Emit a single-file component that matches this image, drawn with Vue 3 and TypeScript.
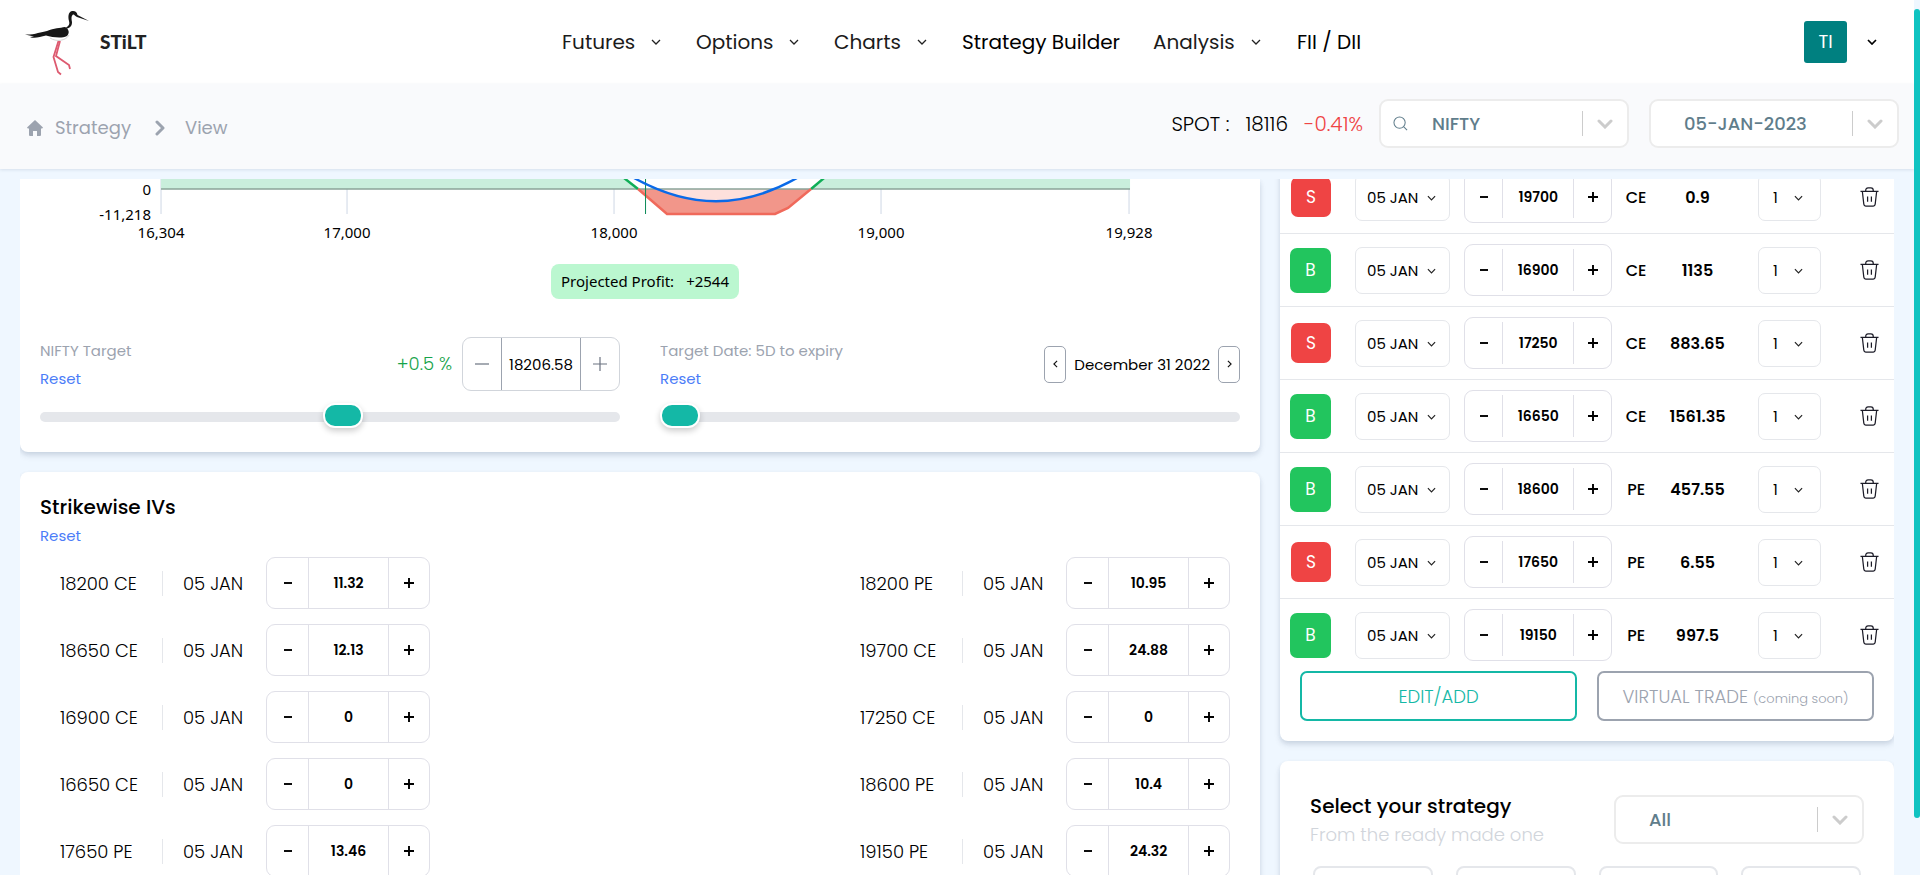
<script setup lang="ts">
import { ref } from 'vue'

interface NavItem {
  label: string
  menu: boolean
}
interface Leg {
  side: 'B' | 'S'
  strike: string
  type: 'CE' | 'PE'
  price: string
}
interface StrikeIv {
  name: string
  iv: string
}

const navItems: NavItem[] = [
  { label: 'Futures', menu: true },
  { label: 'Options', menu: true },
  { label: 'Charts', menu: true },
  { label: 'Strategy Builder', menu: false },
  { label: 'Analysis', menu: true },
  { label: 'FII / DII', menu: false },
]

const legs = ref<Leg[]>([
  { side: 'S', strike: '19700', type: 'CE', price: '0.9' },
  { side: 'B', strike: '16900', type: 'CE', price: '1135' },
  { side: 'S', strike: '17250', type: 'CE', price: '883.65' },
  { side: 'B', strike: '16650', type: 'CE', price: '1561.35' },
  { side: 'B', strike: '18600', type: 'PE', price: '457.55' },
  { side: 'S', strike: '17650', type: 'PE', price: '6.55' },
  { side: 'B', strike: '19150', type: 'PE', price: '997.5' },
])

const ivs = ref<StrikeIv[]>([
  { name: '18200 CE', iv: '11.32' },
  { name: '18200 PE', iv: '10.95' },
  { name: '18650 CE', iv: '12.13' },
  { name: '19700 CE', iv: '24.88' },
  { name: '16900 CE', iv: '0' },
  { name: '17250 CE', iv: '0' },
  { name: '16650 CE', iv: '0' },
  { name: '18600 PE', iv: '10.4' },
  { name: '17650 PE', iv: '13.46' },
  { name: '19150 PE', iv: '24.32' },
])

const ticks = [
  { x: 161, label: '16,304' },
  { x: 347, label: '17,000' },
  { x: 614, label: '18,000' },
  { x: 881, label: '19,000' },
  { x: 1129, label: '19,928' },
]

const target = ref('18206.58')
const targetPosition = ref(524)
const datePosition = ref(0)
</script>

<template>
  <div class="app">
    <header class="topbar">
      <a class="brand" href="#">
        <svg class="bird" viewBox="24 8 66 67" aria-hidden="true">
          <path d="M58.500 40 L53.500 56 L58 71 L61 73.500" fill="none" stroke="#dd5a70" stroke-width="1.800" />
          <path d="M60 40 L56 55 L69 64 L70 68" fill="none" stroke="#dd5a70" stroke-width="1.800" />
          <path d="M50 37 C56 41 66 40 69 34" fill="#fff" stroke="#d4d4d4" stroke-width="1" />
          <path
            d="M25 33.500 C34 34 41 31 47 30 C54 27 60 27 65 26 C69 28 70 32 67 35 C61 38 52 36 46 34.500 C40 36 34 38 30 36 L34 35.500 Z"
            fill="#161616"
          />
          <path
            d="M66 26.500 C69 25 70 23 69 20 C68 16 68 11 72 10 C75 9.500 77 11 77.500 14 L89 20 L77 16 C75 15 74 13 73 13.500 C71 15 71.500 18 72 21 C72 25 70 27 67 27.500 Z"
            fill="#161616"
          />
        </svg>
        <span class="brand-name">STiLT</span>
      </a>
      <nav class="nav" aria-label="Main">
        <a v-for="item in navItems" :key="item.label" href="#" class="nav-link" :class="{ plain: !item.menu }">
          {{ item.label }}
          <svg v-if="item.menu" class="chev" viewBox="0 0 10 6" aria-hidden="true"><path d="M1 1l4 4 4-4" /></svg>
        </a>
      </nav>
      <button class="account" type="button" aria-label="Account menu">
        <span class="avatar">TI</span>
        <svg class="chev bold" viewBox="0 0 10 6" aria-hidden="true"><path d="M1 1l4 4 4-4" /></svg>
      </button>
    </header>

    <div class="subbar">
      <nav class="crumbs" aria-label="Breadcrumb">
        <svg class="home" viewBox="0 0 16 16" aria-hidden="true">
          <path d="M8 0l8 7.500-.8 1H14V15q0 1-1 1H10V11H6v5H3q-1 0-1-1V8.500H.8L0 7.500Z" />
        </svg>
        <a href="#">Strategy</a>
        <svg class="crumb-sep" viewBox="0 0 10 16" aria-hidden="true"><path d="M2 2l6 6-6 6" /></svg>
        <a href="#">View</a>
      </nav>
      <div class="spot">
        <span>SPOT :</span>
        <span>18116</span>
        <span class="down">-0.41%</span>
      </div>
      <div class="pick search">
        <svg class="lens" viewBox="0 0 16 16" aria-hidden="true">
          <circle cx="7" cy="7" r="6" /><path d="M11.500 11.500l3.500 3.500" />
        </svg>
        <select aria-label="Symbol"><option>NIFTY</option></select>
        <svg class="pick-arrow" viewBox="0 0 16 10" aria-hidden="true"><path d="M2 2l6 6 6-6" /></svg>
      </div>
      <div class="pick">
        <select aria-label="Expiry"><option>05-JAN-2023</option></select>
        <svg class="pick-arrow" viewBox="0 0 16 10" aria-hidden="true"><path d="M2 2l6 6 6-6" /></svg>
      </div>
    </div>

    <main class="content">
      <div class="column">
        <section class="card first">
          <svg class="chart" viewBox="20 179 1240 66" role="img" aria-label="Payoff chart">
            <g stroke="#dfe5ee" stroke-width="1.500">
              <line v-for="t in ticks" :key="t.x" :x1="t.x" :x2="t.x" y1="179" y2="214" />
            </g>
            <path d="M161 179H624L638 189H161Z" fill="#c9eedc" />
            <path d="M824 179H1130V189H811Z" fill="#c9eedc" />
            <path d="M638 189L667 214H775L788 208L811 189Z" fill="#f2968a" />
            <path d="M658 189Q716 213 773 189Z" fill="#fde0dc" />
            <path d="M161 189H1130" stroke="#8aa398" stroke-width="1.500" />
            <path d="M624 178L638 189" stroke="#0fae57" stroke-width="2.500" />
            <path d="M811 189L824 178" stroke="#0fae57" stroke-width="2.500" />
            <path d="M638 189L667 214H775L788 208L811 189" fill="none" stroke="#f0695b" stroke-width="2.500" />
            <path d="M645.500 179V214" stroke="#0b8a57" stroke-width="1" />
            <path d="M634 178C690 209 742 209 797 178" fill="none" stroke="#0a6ae8" stroke-width="2.500" />
            <g text-anchor="end">
              <text x="151" y="195">0</text>
              <text x="151" y="220">-11,218</text>
            </g>
            <g text-anchor="middle">
              <text v-for="t in ticks" :key="t.label" :x="t.x" y="238">{{ t.label }}</text>
            </g>
          </svg>
          <div class="profit-row">
            <p class="profit"><span>Projected Profit:</span><span>+2544</span></p>
          </div>
          <div class="targets">
            <div class="target">
              <div class="target-head">
                <div class="target-name">
                  <label for="target-range">NIFTY Target</label>
                  <button class="reset" type="button">Reset</button>
                </div>
                <span class="change">+0.5 %</span>
                <div class="stepper light">
                  <button type="button" aria-label="Decrease target">
                    <svg viewBox="0 0 14 14"><path d="M0 7H14" /></svg>
                  </button>
                  <input v-model="target" aria-label="Target price" />
                  <button type="button" aria-label="Increase target">
                    <svg viewBox="0 0 14 14"><path d="M0 7H14M7 0V14" /></svg>
                  </button>
                </div>
              </div>
              <input id="target-range" v-model="targetPosition" class="range" type="range" min="0" max="1000" />
            </div>
            <div class="target">
              <div class="target-head">
                <div class="target-name">
                  <label for="date-range">Target Date: 5D to expiry</label>
                  <button class="reset" type="button">Reset</button>
                </div>
                <div class="day">
                  <button type="button" aria-label="Previous day">
                    <svg viewBox="0 0 6 10"><path d="M5 1L1 5l4 4" /></svg>
                  </button>
                  <span>December 31 2022</span>
                  <button type="button" aria-label="Next day">
                    <svg viewBox="0 0 6 10"><path d="M1 1l4 4-4 4" /></svg>
                  </button>
                </div>
              </div>
              <input id="date-range" v-model="datePosition" class="range" type="range" min="0" max="1000" />
            </div>
          </div>
        </section>

        <section class="card ivs">
          <h2>Strikewise IVs</h2>
          <button class="reset" type="button">Reset</button>
          <ul class="iv-list">
            <li v-for="row in ivs" :key="row.name">
              <span class="iv-name">{{ row.name }}</span>
              <span class="iv-date">05 JAN</span>
              <div class="stepper wide">
                <button type="button" :aria-label="'Decrease IV of ' + row.name">
                  <svg viewBox="0 0 10 10"><path d="M1 5H9" /></svg>
                </button>
                <input v-model="row.iv" :aria-label="'IV of ' + row.name" />
                <button type="button" :aria-label="'Increase IV of ' + row.name">
                  <svg viewBox="0 0 10 10"><path d="M0 5H10M5 0V10" /></svg>
                </button>
              </div>
            </li>
          </ul>
        </section>
      </div>

      <div class="column">
        <section class="card first">
          <table class="legs" aria-label="Strategy legs">
            <colgroup>
              <col class="c-side" /><col class="c-date" /><col class="c-strike" /><col class="c-type" />
              <col class="c-price" /><col class="c-qty" /><col class="c-del" />
            </colgroup>
            <tbody>
              <tr v-for="leg in legs" :key="leg.price">
                <td>
                  <button class="side" :class="leg.side === 'B' ? 'buy' : 'sell'" type="button">{{ leg.side }}</button>
                </td>
                <td>
                  <div class="mini date">
                    <select :aria-label="'Expiry of ' + leg.strike"><option>05 JAN</option></select>
                    <svg class="chev" viewBox="0 0 10 6" aria-hidden="true"><path d="M1 1l4 4 4-4" /></svg>
                  </div>
                </td>
                <td>
                  <div class="stepper inset">
                    <button type="button" :aria-label="'Lower strike ' + leg.strike">
                      <svg viewBox="0 0 10 10"><path d="M1 5H9" /></svg>
                    </button>
                    <input v-model="leg.strike" aria-label="Strike" />
                    <button type="button" :aria-label="'Raise strike ' + leg.strike">
                      <svg viewBox="0 0 10 10"><path d="M0 5H10M5 0V10" /></svg>
                    </button>
                  </div>
                </td>
                <td class="type">{{ leg.type }}</td>
                <td class="price">{{ leg.price }}</td>
                <td class="qty">
                  <div class="mini lots">
                    <select :aria-label="'Lots of ' + leg.strike"><option>1</option></select>
                    <svg class="chev" viewBox="0 0 10 6" aria-hidden="true"><path d="M1 1l4 4 4-4" /></svg>
                  </div>
                </td>
                <td class="del">
                  <button type="button" aria-label="Delete leg">
                    <svg viewBox="0 0 20 21">
                      <path d="M0.500 4.500H19.500M6 4Q6 1 8.500 1H11.500Q14 1 14 4M2.500 5L4 18Q4.200 20 6 20H14Q15.800 20 16 18L17.500 5M8 10V15.500M12 10V15.500" />
                    </svg>
                  </button>
                </td>
              </tr>
            </tbody>
          </table>
          <div class="actions">
            <button class="edit" type="button">EDIT/ADD</button>
            <button class="trade" type="button">VIRTUAL TRADE <small>(coming soon)</small></button>
          </div>
        </section>

        <section class="card strategies">
          <div class="strategies-head">
            <div>
              <h2>Select your strategy</h2>
              <p>From the ready made one</p>
            </div>
            <div class="pick">
              <select aria-label="Strategy filter"><option>All</option></select>
              <svg class="pick-arrow" viewBox="0 0 16 10" aria-hidden="true"><path d="M2 2l6 6 6-6" /></svg>
            </div>
          </div>
          <div class="tiles">
            <div v-for="n in 4" :key="n" class="tile"></div>
          </div>
        </section>
      </div>
    </main>
    <div class="scroll-thumb" aria-hidden="true"></div>
  </div>
</template>

<style>
body {
  margin: 0;
  overflow: hidden;
}
</style>

<style scoped>
.app {
  position: relative;
  display: flex;
  flex-direction: column;
  height: 100vh;
  box-sizing: border-box;
  padding-right: 6px;
  background: #eff7ff;
  color: #000;
  font-family: Poppins, Inter, 'Open Sans', sans-serif;
}
.app *,
.app *::before {
  box-sizing: border-box;
}
button,
input,
select {
  margin: 0;
  padding: 0;
  border: 0;
  background: none;
  color: inherit;
  font: inherit;
}
select {
  appearance: none;
  outline: none;
}
a {
  color: inherit;
  text-decoration: none;
}
h2,
p,
ul {
  margin: 0;
  padding: 0;
  list-style: none;
}
svg {
  display: block;
  flex: none;
}
.scroll-thumb {
  position: absolute;
  top: 9px;
  right: 0;
  width: 6px;
  height: 92.4%;
  border-radius: 3px;
  background: #10c3c1;
}

.topbar {
  flex: none;
  display: grid;
  grid-template-columns: 1fr auto 1fr;
  align-items: center;
  height: 84px;
  padding: 0 12px 0 24px;
  background: #fff;
}
.brand {
  display: flex;
  align-items: center;
  gap: 10px;
}
.bird {
  width: 66px;
  height: 67px;
}
.brand-name {
  color: #222;
  font: 900 19px/24px Lato, sans-serif;
}
.nav {
  display: grid;
  grid-template-columns: 134px 138px 128px 191px 144px 67px;
  font-size: 20px;
  line-height: 28px;
}
.nav-link {
  display: flex;
  align-items: center;
  gap: 16px;
  color: #1b1b1b;
  white-space: nowrap;
}
.nav-link.plain {
  color: #000;
}
.chev {
  width: 10px;
  height: 6px;
  fill: none;
  stroke: #222;
  stroke-width: 1.3;
}
.chev.bold {
  stroke: #000;
  stroke-width: 1.7;
}
.account {
  justify-self: end;
  display: flex;
  align-items: center;
  gap: 20px;
  margin-right: 25px;
}
.avatar {
  width: 43px;
  height: 42px;
  border-radius: 3px;
  background: #008080;
  color: #fff;
  font-size: 18px;
  line-height: 42px;
}

.subbar {
  position: relative;
  flex: none;
  display: flex;
  align-items: center;
  height: 85px;
  padding: 0 15px 6px 27px;
  background: #f9fafc;
  box-shadow: 0 1px 3px rgba(30, 60, 100, 0.12);
}
.crumbs {
  display: flex;
  align-items: center;
  padding-top: 8px;
  color: #9ca3af;
  font-size: 18px;
  font-weight: 400;
  line-height: 24px;
}
.home {
  width: 16px;
  height: 16px;
  margin-right: 12px;
  fill: #9ca3af;
}
.crumb-sep {
  width: 10px;
  height: 16px;
  margin: 0 20px 0 24px;
  fill: none;
  stroke: #9ca3af;
  stroke-width: 3;
  stroke-linecap: round;
  stroke-linejoin: round;
}
.spot {
  display: flex;
  gap: 16px;
  margin-left: auto;
  margin-right: 16px;
  font-size: 20px;
  font-weight: 300;
  line-height: 28px;
}
.down {
  color: #ef4444;
}
.pick {
  position: relative;
  width: 250px;
  height: 49px;
  border: 2px solid #ececec;
  border-radius: 9px;
  background: #fff;
}
.pick + .pick {
  margin-left: 20px;
}
.pick select {
  width: 100%;
  height: 100%;
  padding-left: 33px;
  color: #607d8b;
  font-size: 18px;
  font-weight: 500;
}
.pick.search select {
  padding-left: 51px;
}
.pick::before {
  content: '';
  position: absolute;
  top: 10px;
  right: 44px;
  width: 1px;
  height: 25px;
  background: #ccc;
}
.pick-arrow {
  position: absolute;
  top: 18px;
  right: 14px;
  width: 16px;
  height: 10px;
  fill: none;
  stroke: #ccc;
  stroke-width: 3;
  stroke-linecap: round;
  pointer-events: none;
}
.lens {
  position: absolute;
  top: 15px;
  left: 12px;
  width: 15px;
  height: 15px;
  fill: none;
  stroke: #607d8b;
  stroke-width: 1.1;
}

.content {
  flex: 1;
  min-height: 0;
  display: grid;
  grid-template-columns: minmax(0, 2.02fr) minmax(0, 1fr);
  gap: 20px;
  margin: 10px 20px 0;
  overflow: hidden;
}
.column {
  min-width: 0;
}
.card {
  border-radius: 8px;
  background: #fff;
  box-shadow: 0 4px 6px rgba(15, 35, 80, 0.1), 0 2px 4px rgba(15, 35, 80, 0.08);
}
.card.first {
  margin-bottom: 20px;
  border-radius: 0 0 8px 8px;
}

.chart {
  width: 100%;
  font: 15px 'Noto Sans', sans-serif;
}
.profit-row {
  display: flex;
  justify-content: center;
  padding: 19px 0 38px 10px;
}
.profit {
  display: flex;
  gap: 12px;
  padding: 0 10px;
  border-radius: 8px;
  background: #bbf7d0;
  font: 15px/35px 'Noto Sans', sans-serif;
}
.targets {
  display: grid;
  grid-template-columns: 1fr 1fr;
  gap: 40px;
  padding: 0 20px 22px;
}
.target-head {
  display: flex;
  height: 56px;
}
.target-name {
  flex: 1;
  display: flex;
  flex-direction: column;
  align-items: flex-start;
  color: #9ca3af;
  font-size: 15px;
  line-height: 28px;
}
.reset {
  color: #4b7df8;
  font-size: 15px;
  line-height: 28px;
}
.change {
  margin-right: 10px;
  color: #16a34a;
  font-size: 18px;
  font-weight: 300;
  line-height: 54px;
}
.range {
  display: block;
  width: 100%;
  height: 26px;
  margin-top: 11px;
  appearance: none;
}
.range::-webkit-slider-runnable-track {
  height: 10px;
  border-radius: 5px;
  background: #e5e7eb;
}
.range::-webkit-slider-thumb {
  width: 40px;
  height: 25px;
  margin-top: -9px;
  border: 2px solid #fff;
  border-radius: 12px;
  background: #14b8a6;
  box-shadow: 0 3px 6px rgba(0, 0, 0, 0.2);
  appearance: none;
}
.day {
  display: flex;
  align-items: center;
  gap: 8px;
  height: 54px;
  font-size: 15px;
}
.day button {
  display: grid;
  place-items: center;
  width: 22px;
  height: 37px;
  border: 1px solid #9ca3af;
  border-radius: 5px;
}
.day svg {
  width: 5px;
  height: 8px;
  fill: none;
  stroke: #111;
  stroke-width: 1.4;
}

.stepper {
  display: grid;
  height: 52px;
  border: 1px solid #e0e0e8;
  border-radius: 9px;
}
.stepper button {
  display: grid;
  place-items: center;
}
.stepper svg {
  width: 10px;
  height: 10px;
  fill: none;
  stroke: #000;
  stroke-width: 1.9;
}
.stepper input {
  min-width: 0;
  width: 100%;
  border: solid #e0e0e8;
  border-width: 0 1px;
  font-size: 14px;
  font-weight: 600;
  text-align: center;
}
.stepper.light {
  grid-template-columns: 38px 80px 38px;
  height: 54px;
  border-color: #d1d5db;
}
.stepper.light svg {
  width: 14px;
  height: 14px;
  stroke: #6b7280;
  stroke-width: 1.2;
}
.stepper.light input {
  border-color: #9ca3af;
  font-size: 15px;
  font-weight: 400;
}
.stepper.wide {
  grid-template-columns: 41px 81px 40px;
  width: 164px;
}
.stepper.inset {
  grid-template-columns: 37px 72px 37px;
  width: 148px;
}
.stepper.inset input {
  height: 42px;
  align-self: center;
}

.ivs {
  padding: 20px;
}
h2 {
  font-size: 20px;
  font-weight: 500;
  line-height: 30px;
}
.ivs .reset {
  display: block;
}
.iv-list {
  display: grid;
  grid-template-columns: 400px 400px;
  justify-content: space-between;
  row-gap: 15px;
  padding-top: 7px;
}
.iv-list li {
  display: flex;
  align-items: center;
  padding-left: 20px;
  font-size: 18px;
  font-weight: 300;
  line-height: 25px;
}
.iv-name {
  width: 103px;
  border-right: 1px solid #e5e7eb;
}
.iv-date {
  width: 103px;
  padding-left: 20px;
}

.legs {
  width: 100%;
  margin-top: -18px;
  border-spacing: 0;
  table-layout: fixed;
}
.c-side {
  width: 12.2%;
}
.c-date {
  width: 17.8%;
}
.c-strike {
  width: 24.1%;
}
.c-type {
  width: 7.8%;
}
.c-price {
  width: 12.2%;
}
.c-qty {
  width: 17.8%;
}
.c-del {
  width: 8.1%;
}
.legs td {
  height: 73px;
  padding: 0;
  border-bottom: 1px solid #e5e7eb;
  font-weight: 500;
  vertical-align: middle;
}
.legs tr:last-child td {
  height: 72px;
  border-bottom: 0;
}
.side {
  display: block;
  border-radius: 7px;
  color: #fff;
  font-size: 17px;
  font-weight: 400;
}
.buy {
  width: 41px;
  height: 45px;
  margin-left: 10px;
  background: #22c55e;
}
.sell {
  width: 40px;
  height: 40px;
  margin-left: 11px;
  background: #ef4444;
}
.mini {
  position: relative;
  height: 47px;
  border: 1px solid #e5e7eb;
  border-radius: 7px;
  font-size: 15px;
}
.mini select {
  width: 100%;
  height: 100%;
  padding-left: 11px;
  font-weight: 400;
}
.mini.date {
  width: 95px;
}
.mini.lots {
  width: 63px;
  margin-left: 23px;
}
.mini.lots select {
  padding-left: 14px;
}
.mini .chev {
  position: absolute;
  top: 20px;
  right: 13px;
  width: 9px;
  height: 6px;
  pointer-events: none;
}
.mini.lots .chev {
  right: 17px;
}
.legs .type {
  font-size: 16px;
  text-align: center;
}
.legs .price {
  font-size: 16px;
  font-weight: 600;
  text-align: center;
}
.del button {
  display: grid;
  place-items: center;
  margin: 0 auto;
}
.del svg {
  width: 19px;
  height: 20px;
  fill: none;
  stroke: #1c1c28;
  stroke-width: 1.3;
}
.actions {
  display: grid;
  grid-template-columns: 1fr 1fr;
  gap: 20px;
  padding: 0 20px 20px;
}
.actions button {
  height: 50px;
  border: 2px solid;
  border-radius: 7px;
  font-size: 18px;
  font-weight: 300;
  white-space: nowrap;
}
.actions small {
  font-size: 13px;
}
.edit {
  color: #14b8a6;
}
.actions .trade {
  border-color: #9ca3af;
  color: #9ca3af;
}

.strategies {
  padding: 30px;
}
.strategies-head {
  display: flex;
  justify-content: space-between;
  align-items: center;
  margin-bottom: 18px;
}
.strategies p {
  color: #d1d5db;
  font-size: 18px;
  font-weight: 300;
  line-height: 27px;
}
.tiles {
  display: grid;
  grid-template-columns: repeat(4, 1fr);
  gap: 23px;
  padding: 0 3px;
}
.tile {
  height: 120px;
  border: 2px solid #e5e7eb;
  border-radius: 8px;
}
</style>
